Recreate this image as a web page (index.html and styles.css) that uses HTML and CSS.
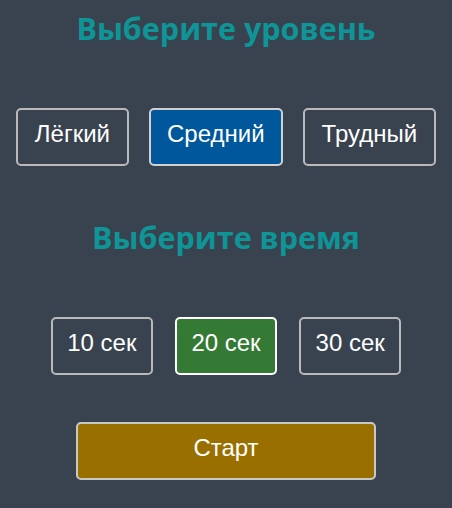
FILE: index.html
```html
<!DOCTYPE html>
<html lang="ru">
<head>
<meta charset="utf-8">
<title>Игра</title>
<link rel="stylesheet" href="styles.css">
</head>
<body>
<main class="menu">
  <h2 class="title title-level">Выберите уровень</h2>
  <div class="options options-level">
    <button class="btn">Лёгкий</button>
    <button class="btn btn-level-active">Средний</button>
    <button class="btn">Трудный</button>
  </div>
  <h2 class="title title-time">Выберите время</h2>
  <div class="options options-time">
    <button class="btn">10 сек</button>
    <button class="btn btn-time-active">20 сек</button>
    <button class="btn">30 сек</button>
  </div>
  <div class="start-row">
    <button class="btn btn-start">Старт</button>
  </div>
</main>
</body>
</html>
```
FILE: styles.css
```css
html, body {
  margin: 0;
  padding: 0;
}
body {
  background: #39434f;
  min-height: 508px;
  font-family: "Liberation Sans", Arial, sans-serif;
}
.menu {
  display: flex;
  flex-direction: column;
  align-items: center;
}
.title {
  margin: 0;
  font-family: "Open Sans", sans-serif;
  font-weight: 700;
  font-size: 30.5px;
  line-height: 34px;
  color: #0e9598;
}
.title-level {
  margin-top: 11px;
}
.title-time {
  margin-top: 54px;
}
.options {
  display: flex;
  justify-content: center;
}
.options-level {
  margin-top: 63px;
  gap: 20px;
}
.options-time {
  margin-top: 63px;
  gap: 22px;
}
.btn {
  font-family: "Liberation Sans", Arial, sans-serif;
  font-size: 24px;
  line-height: 28px;
  color: #ffffff;
  background: transparent;
  border: 2px solid #b9b9b9;
  border-radius: 5px;
  padding: 0 16.5px 6px;
  height: 58px;
  box-sizing: border-box;
}
.options-time .btn {
  padding-left: 14.5px;
  padding-right: 14.5px;
}
.btn-level-active {
  background: #00579b;
  border-color: #d0d0d0;
}
.btn-time-active {
  background: #357a34;
  border-color: #ffffff;
}
.start-row {
  margin-top: 47px;
}
.btn-start {
  width: 300px;
  background: #997000;
  border-color: #c8c8c8;
}
```
